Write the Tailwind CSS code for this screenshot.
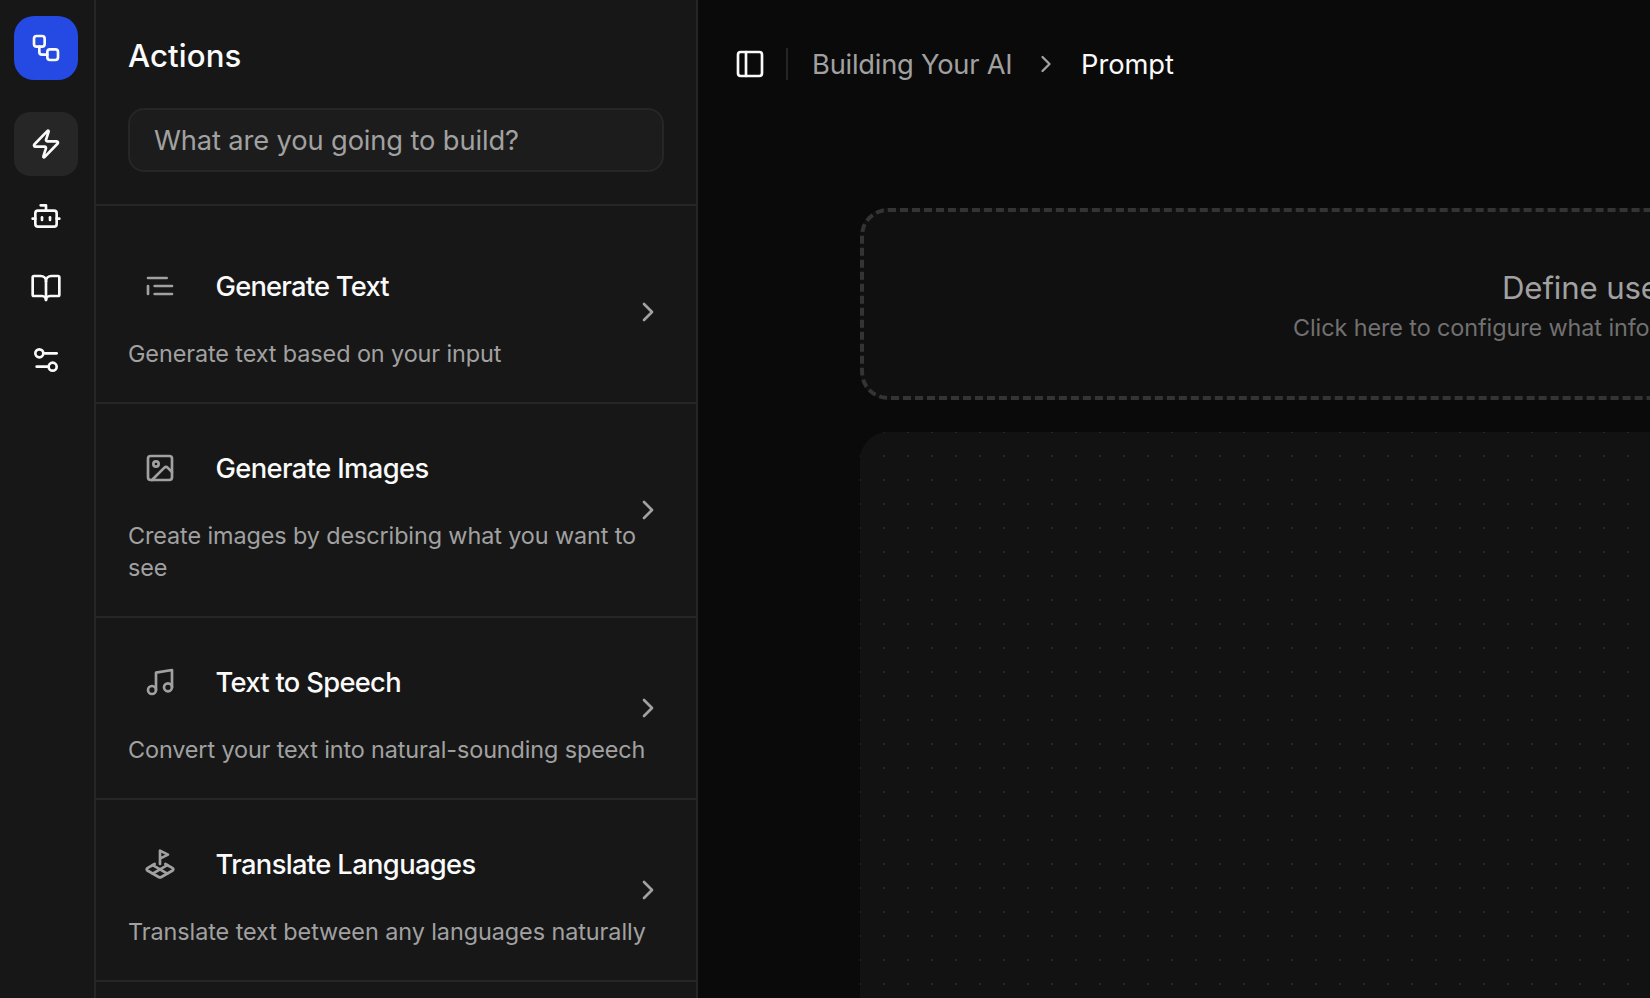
<!DOCTYPE html>
<html lang="en">
<head>
<meta charset="utf-8">
<title>Building Your AI – Prompt</title>
<script src="https://cdn.jsdelivr.net/npm/@tailwindcss/browser@4"></script>
</head>
<body class="flex h-screen w-screen overflow-hidden bg-[#0a0a0a] font-['Inter',sans-serif] text-[#fafafa] antialiased">

<!-- Icon rail -->
<nav class="flex w-24 shrink-0 flex-col items-start border-r-2 border-[#262626] bg-[#171717] pt-4 pl-3.5">
  <a class="mb-8 flex size-16 items-center justify-center rounded-[20px] bg-[#2549e3]">
    <svg class="size-8" viewBox="0 0 24 24" fill="none" stroke="currentColor" stroke-width="2" stroke-linecap="round" stroke-linejoin="round"><rect width="8" height="8" x="3" y="3" rx="2"/><path d="M7 11v4a2 2 0 0 0 2 2h4"/><rect width="8" height="8" x="13" y="13" rx="2"/></svg>
  </a>
  <div class="flex flex-col gap-2">
    <a class="flex size-16 items-center justify-center rounded-2xl bg-[#262626]">
      <svg class="size-8" viewBox="0 0 24 24" fill="none" stroke="currentColor" stroke-width="2" stroke-linecap="round" stroke-linejoin="round"><path d="M4 14a1 1 0 0 1-.78-1.63l9.9-10.2a.5.5 0 0 1 .86.46l-1.92 6.02A1 1 0 0 0 13 10h7a1 1 0 0 1 .78 1.63l-9.9 10.2a.5.5 0 0 1-.86-.46l1.92-6.02A1 1 0 0 0 11 14z"/></svg>
    </a>
    <a class="flex size-16 items-center justify-center">
      <svg class="size-8" viewBox="0 0 24 24" fill="none" stroke="currentColor" stroke-width="2" stroke-linecap="round" stroke-linejoin="round"><path d="M12 8V4H8"/><rect width="16" height="12" x="4" y="8" rx="2"/><path d="M2 14h2"/><path d="M20 14h2"/><path d="M15 13v2"/><path d="M9 13v2"/></svg>
    </a>
    <a class="flex size-16 items-center justify-center">
      <svg class="size-8" viewBox="0 0 24 24" fill="none" stroke="currentColor" stroke-width="2" stroke-linecap="round" stroke-linejoin="round"><path d="M12 7v14"/><path d="M3 18a1 1 0 0 1-1-1V4a1 1 0 0 1 1-1h5a4 4 0 0 1 4 4 4 4 0 0 1 4-4h5a1 1 0 0 1 1 1v13a1 1 0 0 1-1 1h-6a3 3 0 0 0-3 3 3 3 0 0 0-3-3z"/></svg>
    </a>
    <a class="flex size-16 items-center justify-center">
      <svg class="size-8" viewBox="0 0 24 24" fill="none" stroke="currentColor" stroke-width="2" stroke-linecap="round" stroke-linejoin="round"><path d="M20 7h-9"/><path d="M14 17H5"/><circle cx="17" cy="17" r="3"/><circle cx="7" cy="7" r="3"/></svg>
    </a>
  </div>
</nav>

<!-- Actions panel -->
<aside class="flex w-[602px] shrink-0 flex-col border-r-2 border-[#262626] bg-[#171717]">
  <header class="flex flex-col gap-7 border-b-2 border-[#262626] px-8 pt-8 pb-8">
    <h2 class="text-[31.2px] leading-[48px] font-medium tracking-[0.1px]">Actions</h2>
    <div class="flex h-16 items-center rounded-2xl border-2 border-[#262626] bg-[#1c1c1c] px-6 pt-0.5 text-[27.3px] tracking-[-0.13px] text-[#a1a1a1]">What are you going to build?</div>
  </header>
  <div class="flex flex-col pt-4">
    <section class="relative shrink-0 border-b-2 border-[#262626] p-8">
      <div class="flex items-center gap-[23.5px]">
        <div class="flex size-16 items-center justify-center text-[#a1a1a1]">
          <svg class="size-8" viewBox="0 0 24 24" fill="none" stroke="currentColor" stroke-width="2" stroke-linecap="round" stroke-linejoin="round"><path d="M17 6H3"/><path d="M21 12H8"/><path d="M21 18H8"/><path d="M3 12v6"/></svg>
        </div>
        <h3 class="pt-0.5 text-[27.3px] font-medium tracking-[-0.76px]">Generate Text</h3>
      </div>
      <p class="mt-5 text-[23.4px] leading-8 tracking-[-0.09px] whitespace-nowrap text-[#a1a1a1]">Generate text based on your input</p>
      <svg class="absolute top-1/2 right-8 size-8 -translate-y-1/2 text-[#a1a1a1]" viewBox="0 0 24 24" fill="none" stroke="currentColor" stroke-width="2" stroke-linecap="round" stroke-linejoin="round"><path d="m9 18 6-6-6-6"/></svg>
    </section>
    <section class="relative shrink-0 border-b-2 border-[#262626] p-8">
      <div class="flex items-center gap-[23.5px]">
        <div class="flex size-16 items-center justify-center text-[#a1a1a1]">
          <svg class="size-8" viewBox="0 0 24 24" fill="none" stroke="currentColor" stroke-width="2" stroke-linecap="round" stroke-linejoin="round"><rect width="18" height="18" x="3" y="3" rx="2"/><circle cx="9" cy="9" r="2"/><path d="m21 15-3.086-3.086a2 2 0 0 0-2.828 0L6 21"/></svg>
        </div>
        <h3 class="pt-0.5 text-[27.3px] font-medium tracking-[-0.6px]">Generate Images</h3>
      </div>
      <p class="mt-5 text-[23.4px] leading-8 tracking-[-0.1px] whitespace-nowrap text-[#a1a1a1]">Create images by describing what you want to<br>see</p>
      <svg class="absolute top-1/2 right-8 size-8 -translate-y-1/2 text-[#a1a1a1]" viewBox="0 0 24 24" fill="none" stroke="currentColor" stroke-width="2" stroke-linecap="round" stroke-linejoin="round"><path d="m9 18 6-6-6-6"/></svg>
    </section>
    <section class="relative shrink-0 border-b-2 border-[#262626] p-8">
      <div class="flex items-center gap-[23.5px]">
        <div class="flex size-16 items-center justify-center text-[#a1a1a1]">
          <svg class="size-8" viewBox="0 0 24 24" fill="none" stroke="currentColor" stroke-width="2" stroke-linecap="round" stroke-linejoin="round"><path d="M9 18V5l12-2v13"/><circle cx="6" cy="18" r="3"/><circle cx="18" cy="16" r="3"/></svg>
        </div>
        <h3 class="pt-0.5 text-[27.3px] font-medium tracking-[-0.68px]">Text to Speech</h3>
      </div>
      <p class="mt-5 text-[23.4px] leading-8 tracking-[-0.115px] whitespace-nowrap text-[#a1a1a1]">Convert your text into natural-sounding speech</p>
      <svg class="absolute top-1/2 right-8 size-8 -translate-y-1/2 text-[#a1a1a1]" viewBox="0 0 24 24" fill="none" stroke="currentColor" stroke-width="2" stroke-linecap="round" stroke-linejoin="round"><path d="m9 18 6-6-6-6"/></svg>
    </section>
    <section class="relative shrink-0 border-b-2 border-[#262626] p-8">
      <div class="flex items-center gap-[23.5px]">
        <div class="flex size-16 items-center justify-center text-[#a1a1a1]">
          <svg class="size-8" viewBox="0 0 24 24" fill="none" stroke="currentColor" stroke-width="2" stroke-linecap="round" stroke-linejoin="round"><path d="m12 8 6-3-6-3v10"/><path d="m8 11.99-5.5 3.14a1 1 0 0 0 0 1.74l8.5 4.86a2 2 0 0 0 2 0l8.5-4.86a1 1 0 0 0 0-1.74L16 12"/><path d="m6.49 12.85 11.02 6.3"/><path d="M17.51 12.85 6.5 19.15"/></svg>
        </div>
        <h3 class="pt-0.5 text-[27.3px] font-medium tracking-[-0.62px]">Translate Languages</h3>
      </div>
      <p class="mt-5 text-[23.4px] leading-8 tracking-[-0.065px] whitespace-nowrap text-[#a1a1a1]">Translate text between any languages naturally</p>
      <svg class="absolute top-1/2 right-8 size-8 -translate-y-1/2 text-[#a1a1a1]" viewBox="0 0 24 24" fill="none" stroke="currentColor" stroke-width="2" stroke-linecap="round" stroke-linejoin="round"><path d="m9 18 6-6-6-6"/></svg>
    </section>
  </div>
</aside>

<!-- Main area -->
<main class="flex min-w-0 flex-1 flex-col overflow-hidden">
  <header class="flex h-32 shrink-0 items-center pl-9">
    <svg class="size-8" viewBox="0 0 24 24" fill="none" stroke="currentColor" stroke-width="2" stroke-linecap="round" stroke-linejoin="round"><rect width="18" height="18" x="3" y="3" rx="2"/><path d="M9 3v18"/></svg>
    <div class="ml-5 h-8 w-0.5 bg-[#262626]"></div>
    <div class="ml-6 flex items-center gap-5 text-[27.3px] whitespace-nowrap">
      <span class="w-[200px] pt-0.5 tracking-[-0.235px] text-[#a1a1a1]">Building Your AI</span>
      <svg class="size-7 text-[#a1a1a1]" viewBox="0 0 24 24" fill="none" stroke="currentColor" stroke-width="2" stroke-linecap="round" stroke-linejoin="round"><path d="m9 18 6-6-6-6"/></svg>
      <span class="pt-0.5 pl-px tracking-[-0.05px]">Prompt</span>
    </div>
  </header>
  <div class="flex flex-1 flex-col gap-8 pt-20 pl-[162px]">
    <div class="flex h-48 w-[1536px] shrink-0 flex-col justify-center rounded-[28px] border-4 border-dashed border-[#343434] bg-[#101010] whitespace-nowrap">
      <p class="pl-[638px] text-[31.2px] leading-[48px] tracking-[-0.142px] text-[#a1a1a1]">Define use</p>
      <p class="pl-[429px] text-[23.4px] leading-8 tracking-[-0.09px] text-[#717171]">Click here to configure what info</p>
    </div>
    <div class="w-[1536px] flex-1 rounded-tl-[28px] bg-[#121212] bg-[radial-gradient(#262626_1.5px,transparent_0)] bg-[length:24px_24px] bg-[position:-12px_-12px]"></div>
  </div>
</main>
</body>
</html>
